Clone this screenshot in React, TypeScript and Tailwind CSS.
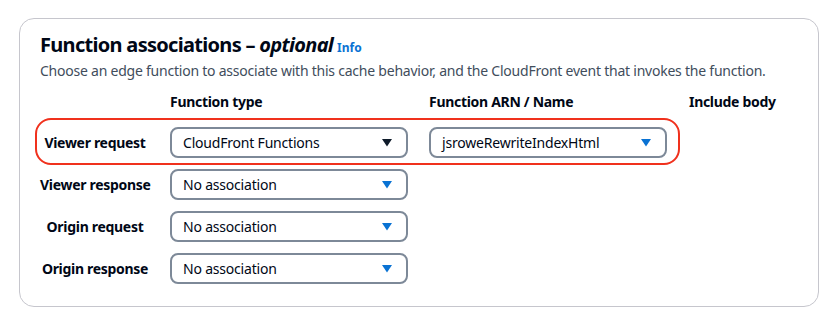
import React from "react";

const Caret = ({ dark }: { dark?: boolean }) => (
  <svg width="10" height="8" viewBox="0 0 10 8" className="shrink-0">
    <path d="M0 0 H10 L5 7.5 Z" fill={dark ? "#0f1b2a" : "#0972d3"} />
  </svg>
);

const Select = ({ value, dark }: { value: string; dark?: boolean }) => (
  <div className="flex h-[31px] w-[238px] items-center justify-between rounded-[8px] border-2 border-[#7d8998] bg-white pl-[11px] pr-[14px] text-[14px] tracking-[-0.2px] text-[#000716]">
    <span>{value}</span>
    <Caret dark={dark} />
  </div>
);

const Label = ({ children }: { children: React.ReactNode }) => (
  <div className="w-[110px] whitespace-nowrap text-center text-[14px] font-bold tracking-[-0.3px] text-[#000716]">
    {children}
  </div>
);

export default function App() {
  return (
    <div
      className="min-h-[322px] bg-white pl-[19px] pt-[18px]"
      style={{ fontFamily: '"Noto Sans", "Open Sans", Arial, sans-serif' }}
    >
      <div className="w-[800px] rounded-[15px] border border-[#c6c6cd] pb-[22px] pl-[20px] pt-[13px]">
        <div className="flex items-baseline gap-[4px] text-[20px] font-bold leading-[26px] tracking-[-0.7px] text-[#000716]">
          <span>
            Function associations – <i>optional</i>
          </span>
          <span className="text-[12px] font-bold tracking-normal text-[#0972d3]">Info</span>
        </div>
        <div className="text-[14px] leading-[20px] tracking-[-0.23px] text-[#414d5c]">
          Choose an edge function to associate with this cache behavior, and the CloudFront event that invokes the function.
        </div>
        <div className="mt-[11px] flex gap-[20px] text-[14px] font-bold leading-[20px] tracking-[-0.3px] text-[#000716]">
          <div className="w-[110px]" />
          <div className="w-[239px]">Function type</div>
          <div className="w-[240px]">Function ARN / Name</div>
          <div>Include body</div>
        </div>
        <div className="mt-[15px] flex flex-col gap-[11px]">
          <div className="relative flex items-center gap-[20px]">
            <div className="pointer-events-none absolute left-[-5px] top-[-9px] h-[47px] w-[645px] rounded-[16px] border-2 border-[#f0311d]" />
            <Label>Viewer request</Label>
            <Select value="CloudFront Functions" dark />
            <div className="ml-[1px]">
              <Select value="jsroweRewriteIndexHtml" />
            </div>
          </div>
          <div className="flex items-center gap-[20px]">
            <Label>Viewer response</Label>
            <Select value="No association" />
          </div>
          <div className="flex items-center gap-[20px]">
            <Label>Origin request</Label>
            <Select value="No association" />
          </div>
          <div className="flex items-center gap-[20px]">
            <Label>Origin response</Label>
            <Select value="No association" />
          </div>
        </div>
      </div>
    </div>
  );
}
